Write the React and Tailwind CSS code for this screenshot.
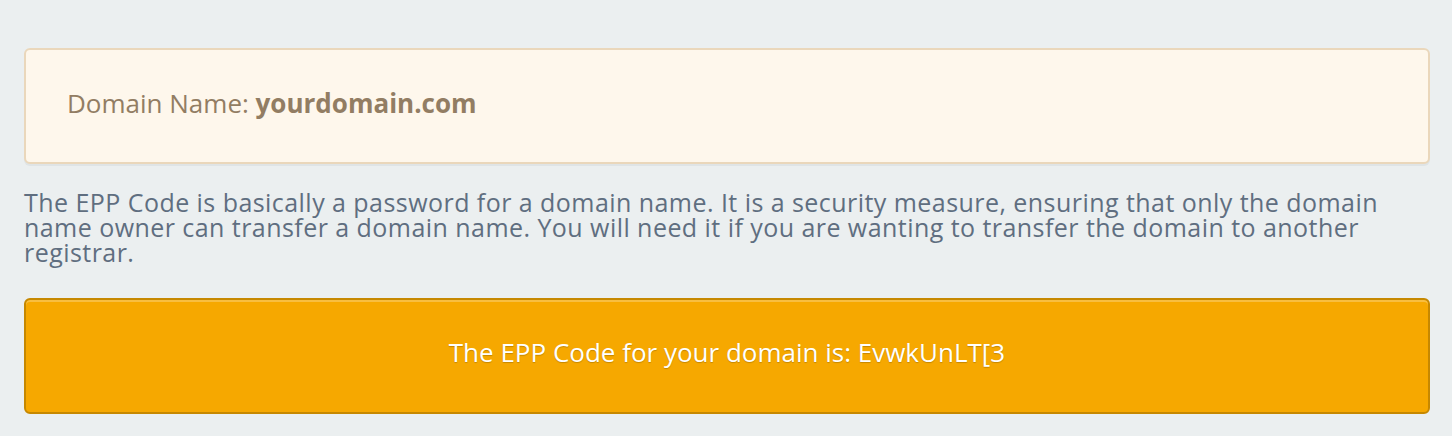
export default function App() {
  return (
    <div
      className="min-h-[436px] bg-[#ebeff0] pl-6 pr-[22px] pt-12"
      style={{ fontFamily: '"Open Sans", "Noto Sans", sans-serif' }}
    >
      <div className="flex h-[116px] items-center rounded-md border-2 border-[#ead7bb] bg-[#fef7ec] px-[41px] pb-[6px] shadow-[0_2px_0_#dfe4e6]">
        <p className="text-[26px] text-[#927d63]">
          Domain Name: <span className="font-bold">yourdomain.com</span>
        </p>
      </div>

      <p className="mt-[26px] text-[25px] leading-[25px] tracking-[0.45px] text-[#5f6e80]">
        The EPP Code is basically a password for a domain name. It is a security measure, ensuring that only the domain
        name owner can transfer a domain name. You will need it if you are wanting to transfer the domain to another
        registrar.
      </p>

      <div className="mt-[33px] flex h-[116px] items-center justify-center rounded-md border-2 border-[#c68800] bg-[#f6a800] pb-[7px] shadow-[inset_0_2px_0_rgba(255,255,255,0.25)]">
        <p className="text-[26px] text-white [text-shadow:0_1px_1px_rgba(0,0,0,0.2)]">
          The EPP Code for your domain is: EvwkUnLT[3
        </p>
      </div>
    </div>
  );
}
